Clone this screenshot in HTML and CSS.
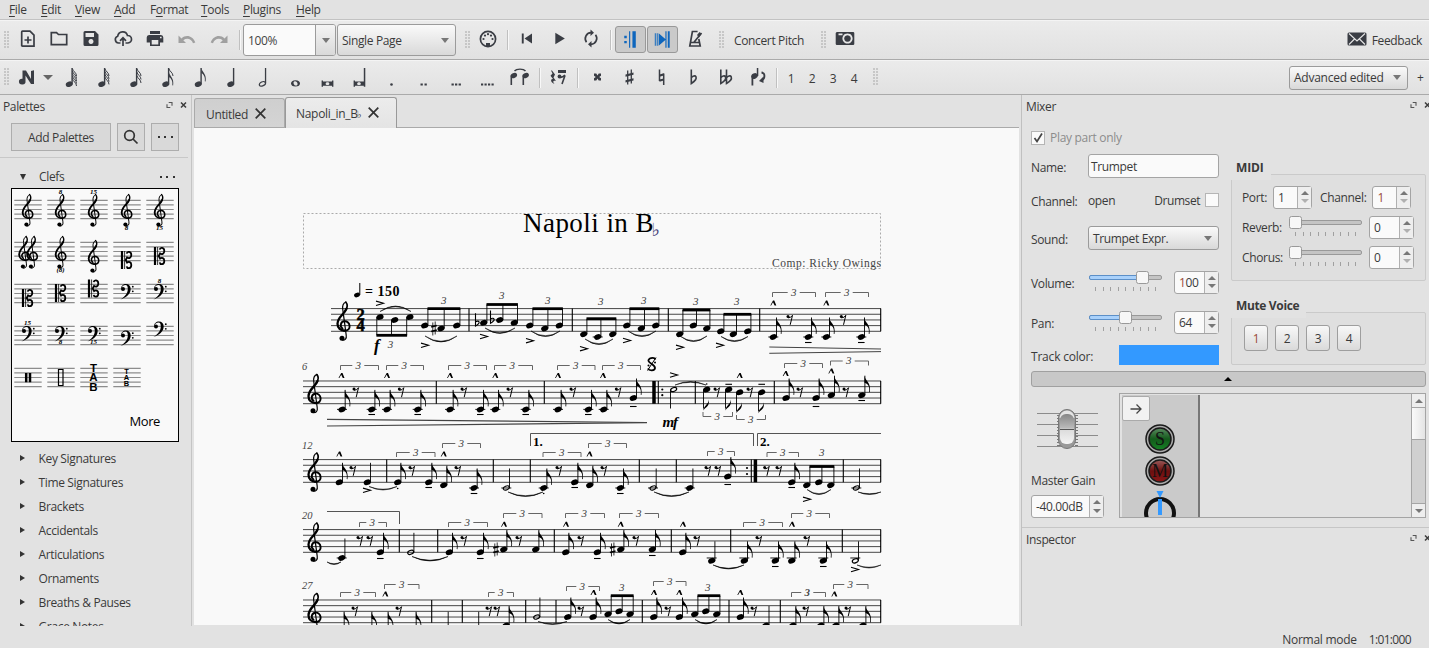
FILE: index.html
```html
<!DOCTYPE html>
<html lang="en">
<head>
<meta charset="utf-8">
<title>Napoli in B♭</title>
<link rel="stylesheet" href="styles.css">
</head>
<body>
<svg class="defs" width="0" height="0">
  <defs>
    <g id="treble" fill="none" stroke="currentColor" stroke-linecap="round">
      <path stroke-width="1.2" d="M2.6-23.6C0-22.5-1-19-.5-16L2.9 9.500C3.600 13.500 1.500 14.600-.6 14.600"/>
      <path stroke-width="1.700" d="M2.600-23.400C4.600-21 4.200-18 2-15"/>
      <path stroke-width="2.300" d="M3.200-17C1-11-5.600-9-5.800-1.800-5.800 2.500-2.500 5 1.200 5"/>
      <path stroke-width="1.900" d="M.6 5.100C5 5.200 6.600 3 6.300.2 6-3 3.500-4.700 1-4.300-2.500-4-4 .6-.8 2.800"/>
      <circle cx="-1.300" cy="12.700" r="2.500" fill="currentColor" stroke="none"/>
    </g>
    <g id="bass" fill="currentColor">
      <circle cx="-3.500" cy="0" r="2"/>
      <path d="M-5.400 0C-5.600-3-3.200-5-.6-5 2.500-5 4.200-3 4.200 0 4.200 5-.5 8.500-6 10.600-1.600 7.500 1.300 4.500 1.300 0 1.300-2.500.6-4-1-4-3-4-4.300-2.800-4.600-1.400z"/>
      <circle cx="6.300" cy="-2.300" r=".9"/><circle cx="6.300" cy="2.300" r=".9"/>
    </g>
    <g id="cclef" fill="none" stroke="currentColor">
      <path stroke-width="2.200" d="M-4.500-9V9"/><path stroke-width=".8" d="M-1.900-9V9"/>
      <path stroke-width="1.800" d="M.2-6.300C.6-9 4.800-9 4.800-5 4.800-2 2.300-1.300.6-2.600L-.8 0 .6 2.600C2.300 1.300 4.800 2 4.800 5 4.800 9 .6 9 .2 6.300"/>
    </g>
    <g id="staff" stroke="#8d8d8d" stroke-width="1.200"><path d="M2.300 11.300h27.400M2.300 15.900h27.400M2.300 20.500h27.400M2.300 25.100h27.400M2.300 29.700h27.400"/></g>
    <g id="i-note"><ellipse cx="-2.800" cy="7.200" rx="3.500" ry="2.600" transform="rotate(-20 -2.800 7.200)"/><path d="M-.6-9h1.400V7.500H-.6z"/></g>
    <g id="i-flag"><path d="M.3-9C1-5 6-3 4.600 4.500L3.800 4.300C4.500 0 2.500-3 .3-4z"/></g>
    <g id="i-sflag" fill="none" stroke="currentColor" stroke-width="1"><path d="M.3-8.500C1-5.500 4.500-4.500 4.500-1"/></g>
    <g id="i-float" fill="none" stroke="#555" stroke-width="1.100"><path d="M-.8-2.500H2.500V.8M.8 2.500H-2.500V-.8"/></g>
    <g id="i-close" fill="none" stroke="#3c3c3c" stroke-width="1.500"><path d="M-2.500-2.500l5 5M2.500-2.500l-5 5"/></g>
  </defs>
</svg>

<nav class="menu">
  <span class="m1"><u>F</u>ile</span><span class="m2"><u>E</u>dit</span><span class="m3"><u>V</u>iew</span><span class="m4"><u>A</u>dd</span><span class="m5">F<u>o</u>rmat</span><span class="m6"><u>T</u>ools</span><span class="m7"><u>P</u>lugins</span><span><u>H</u>elp</span>
</nav>

<div class="bar bar1">
  <i class="grip"></i>
  <svg class="ic first" viewBox="-16 -13 32 26"><g fill="none" stroke="currentColor" stroke-width="1.700"><path d="M-5.500-7.800H2L6-3.800V7.200H-5.500a.8.800 0 0 1-.8-.8V-7a.8.800 0 0 1 .8-.8zM0-2.500v7M-3.500 1h7"/></g></svg>
  <svg class="ic" viewBox="-16 -13 32 26"><path fill="none" stroke="currentColor" stroke-width="1.700" d="M-7.700-6.400h5.200l2 1.900H7.700V5.700H-7.700z"/></svg>
  <svg class="ic" viewBox="-16 -13 32 26"><path fill-rule="evenodd" d="M-6-8H4L7.500-4.500V5.500a1.500 1.500 0 0 1-1.500 1.500H-6A1.500 1.500 0 0 1-7.500 5.500V-6.500A1.500 1.500 0 0 1-6-8zM-5.500-6v4H3v-4zM0 0a2.500 2.500 0 1 0 .01 0z"/></svg>
  <svg class="ic" viewBox="-16 -13 32 26"><g fill="none" stroke="currentColor" stroke-width="1.700"><path d="M-2.500 4H-4.500A3.500 3.500 0 0 1-5.300-2.800C-4.500-8 3-9 4.500-3.500A3.700 3.700 0 0 1 5 4H2.500M0 7V-1M-3 1.800 0-1.200 3 1.800"/></g></svg>
  <svg class="ic" viewBox="-16 -13 32 26"><path fill-rule="evenodd" d="M-5-8H5v3H-5zM-6-4H6A2.500 2.500 0 0 1 8.300-1.500V3.500H5V7H-5V3.500H-8.300V-1.500A2.500 2.500 0 0 1-6-4zM-3.300 1v4.500H3.300V1zM5-2.300v1.600h1.600v-1.600z"/></svg>
  <svg class="ic dim" viewBox="-16 -13 32 26"><path d="M-8.500-3.500V4H-1L-3.700 1.300C0-1.500 4.500 0 6 4.200L8.300 3.400C6-3-1-5-5.500-.5z"/></svg>
  <svg class="ic dim" viewBox="-16 -13 32 26"><path d="M8.500-3.500V4H1L3.700 1.300C0-1.500-4.500 0-6 4.200L-8.300 3.400C-6-3 1-5 5.500-.5z"/></svg>
  <i class="sep s1"></i>
  <div class="combo zoom"><span>100%</span><b><i class="tri"></i></b></div>
  <div class="combo page"><span>Single Page</span><i class="tri"></i></div>
  <i class="grip g2"></i>
  <svg class="ic c2" viewBox="-16 -13 32 26"><circle r="7.600" fill="none" stroke="currentColor" stroke-width="1.700"/><circle cx="-4.500" cy="0" r="1.100"/><circle cx="4.500" cy="0" r="1.100"/><circle cx="-3" cy="-3.400" r="1.100"/><circle cx="3" cy="-3.400" r="1.100"/><circle cy="-4.800" r="1.100"/><path d="M-2 7.500V4h4v3.500z"/></svg>
  <i class="sep s2"></i>
  <svg class="ic" viewBox="-16 -13 32 26"><path d="M-5.200-5.500h1.900V4.500h-1.900zM5-5.500V4.500L-2.500-.5z"/></svg>
  <svg class="ic" viewBox="-16 -13 32 26"><path d="M-3.700-6.200V5.200L5.800-.5z"/></svg>
  <svg class="ic" viewBox="-16 -13 32 26"><g fill="none" stroke="currentColor" stroke-width="1.700"><path d="M-4.500 3.300A6 6 0 0 1 0-6.300M4.500-4.300A6 6 0 0 1 0 5.300"/></g><path d="M-.5-9.500V-3L3-6.300zM.5 8.500V2L-3 5.300z"/></svg>
  <i class="sep s3"></i>
  <span class="toggle"><svg viewBox="-15 -13 30 26"><path d="M2-8.500h3.500V8.500H2zM-1.500-8.500h1.200V8.500h-1.200zM-6.500-3.800h2.600v2.500h-2.600zM-6.500 1.500h2.600V4h-2.600z"/></svg></span>
  <span class="toggle"><svg viewBox="-15 -13 30 26"><path d="M-8-6.500h1V6.500h-1zM-6-6.500h1V6.500h-1zM-4-6.500 3.500 0-4 6.500zM3-8.500h1.200V8.500H3zM5.500-8.500h2V8.500h-2z"/></svg></span>
  <svg class="ic" viewBox="-16 -13 32 26"><g fill="none" stroke="currentColor" stroke-width="1.700"><path d="M3.800 0 5.200 7H-5.200L-2.600-7.500H2.600M-1 3.200 6.500-6M-4 3.500H4"/></g><path d="M2-4l2.500-3 2 2L4-1.500z"/></svg>
  <i class="grip g3"></i><span class="cp">Concert Pitch</span><i class="grip"></i>
  <svg class="ic cam" viewBox="-16 -13 32 26"><path fill-rule="evenodd" d="M-8.300-7H8A1.200 1.200 0 0 1 9.300-6V5A1.200 1.200 0 0 1 8 6H-8A1.200 1.200 0 0 1-9.300 5V-6zM-6.500-5.500v1.700h4v-1.700zM2.500-5.600a5.100 5.100 0 1 0 .01 0zM2.500-3.800a3.300 3.300 0 1 1-.01 0z"/></svg>
  <span class="feedback"><svg width="20" height="14" viewBox="0 0 20 14"><rect x=".5" y=".5" width="19" height="13" rx="1.500"/><path d="M2 1.500 10 9l8-7.500M2 12.500l5.500-5.500M18 12.500l-5.500-5.500" fill="none" stroke="#e8e8e8" stroke-width="1.100"/></svg>Feedback</span>
</div>

<div class="bar bar2">
  <i class="grip"></i>
  <svg class="nn" viewBox="0 0 28 26"><path d="M8.500 5.500h3.500l5 8.500V6l3-.8V19H17L11.500 10.500v5.700A3.300 2.900 0 1 1 8.500 13.700z"/></svg>
  <i class="tri big"></i>
  <svg class="ic" viewBox="-16 -13 32 26"><use href="#i-note"/><use href="#i-sflag"/><use href="#i-sflag" y="2.500"/><use href="#i-sflag" y="5"/><use href="#i-sflag" y="7.500"/><use href="#i-sflag" y="10"/></svg>
  <svg class="ic" viewBox="-16.500 -13 32 26"><use href="#i-note"/><use href="#i-sflag"/><use href="#i-sflag" y="2.800"/><use href="#i-sflag" y="5.600"/><use href="#i-sflag" y="8.400"/></svg>
  <svg class="ic" viewBox="-16.500 -13 32 26"><use href="#i-note"/><use href="#i-sflag"/><use href="#i-sflag" y="3.500"/><use href="#i-sflag" y="7"/></svg>
  <svg class="ic" viewBox="-16.500 -13 32 26"><use href="#i-note"/><use href="#i-sflag"/><use href="#i-flag" y="4"/></svg>
  <svg class="ic" viewBox="-17 -13 32 26"><use href="#i-note"/><use href="#i-flag"/></svg>
  <svg class="ic" viewBox="-17.500 -13 32 26"><use href="#i-note"/></svg>
  <svg class="ic" viewBox="-17 -13 32 26"><ellipse cx="-2.600" cy="6.800" rx="3.300" ry="2" transform="rotate(-25 -2.600 6.800)" fill="none" stroke="currentColor" stroke-width="1.200"/><path d="M-.1-9H1.200V6H-.1z"/></svg>
  <svg class="ic" viewBox="-15.500 -13 32 26"><path fill-rule="evenodd" d="M0 3.200c6 0 6 6.400 0 6.400s-6-6.400 0-6.400zM-.5 4.200C-3 4-2 8.500.5 8.600S2.500 4.300-.5 4.200z"/></svg>
  <svg class="ic" viewBox="-15.500 -13 32 26"><path fill-rule="evenodd" d="M-5.900 3.500h1.400V4.600h9V3.500h1.400v6.300H4.500V8.700h-9v1.100h-1.400zM0 5.200c-2.500 0-2.500 2.900 0 2.900s2.500-2.900 0-2.900z"/></svg>
  <svg class="ic" viewBox="-15.500 -13 32 26"><path fill-rule="evenodd" d="M-5.900 3.500h1.400V4.600h8.800V-9h1.500V9.800H4.300V8.700h-8.800v1.100h-1.400zM-.5 5.200c-2.500 0-2.500 2.900 0 2.900s2.500-2.900 0-2.900z"/></svg>
  <svg class="ic" viewBox="-15.500 -13 32 26"><circle cx="0" cy="7.500" r="1.300"/></svg>
  <svg class="ic" viewBox="-15.500 -13 32 26"><path d="M-3 6.400h2.300v2.200H-3zM1 6.400h2.300v2.200H1z"/></svg>
  <svg class="ic" viewBox="-16 -13 32 26"><path d="M-4.500 6.400h2.300v2.200h-2.300zM-1 6.400h2.300v2.200H-1zM2.600 6.400h2.300v2.200H2.600z"/></svg>
  <svg class="ic" viewBox="-15.500 -13 32 26"><path d="M-6.500 6.400h2.200v2.200h-2.200zM-3 6.400h2.200v2.200H-3zM.5 6.400h2.200v2.200H.5zM4 6.400h2.200v2.200H4z"/></svg>
  <svg class="ic" viewBox="-15.500 -13 32 26"><ellipse cx="-5.600" cy="-1.500" rx="3.300" ry="2.500" transform="rotate(-25 -5.600 -1.500)"/><ellipse cx="6.200" cy="-1.500" rx="3.300" ry="2.500" transform="rotate(-25 6.200 -1.500)"/><path d="M-9-1.500h1.600V8H-9zM3-1.500h1.600V8H3z"/><path d="M-5-6C-3-8.500 4-8.500 6-6" fill="none" stroke="currentColor" stroke-width="1.400"/></svg>
  <i class="sep t1"></i>
  <svg class="ic" viewBox="-16 -13 32 26"><path d="M-6-6.500-3-2.500-4.500.5-2 4C-5 3-5.500 4.500-3.500 7-8 5-7.500 1.500-5 2L-7.500-1.200-5.500-3.500-7-6.500z"/><path d="M0-7h8v3H0z"/><path fill="none" stroke="currentColor" stroke-width="1.600" d="M7-1.500 4 7M1 0C3 1 5 0 7-2"/><circle cx="1.500" cy="-.5" r="1.900"/></svg>
  <i class="sep t3"></i>
  <svg class="ic" viewBox="-16.500 -13 32 26"><path d="M-3.500-3.500h2.300L0-1.500l1.200-2h2.300v2.300L1.700 0l1.800 1.200v2.300H1.200L0 1.500l-1.200 2h-2.300V1.200L-1.700 0l-1.800-1.200z"/></svg>
  <svg class="ic" viewBox="-16.500 -13 32 26"><path fill="none" stroke="currentColor" stroke-width="1.300" d="M-1.800-6.500V7.500M1.800-7.500V6.500"/><path d="M-4-2.500 4-4.500v2.300l-8 2zM-4 3.200 4 1.200v2.300l-8 2z"/></svg>
  <svg class="ic" viewBox="-16.500 -13 32 26"><path fill="none" stroke="currentColor" stroke-width="1.500" d="M-2-7.500V4M2.200-3.500V8"/><path d="M-2-2.500 2.200-3.700v2.200L-2-.3zM-2 2.600 2.200 1.400v2.200L-2 4.800z"/></svg>
  <svg class="ic" viewBox="-16.500 -13 32 26"><path fill="none" stroke="currentColor" stroke-width="1.600" d="M-2.200-7.500V6.500C1 4.500 3.400 2 2.500-.2 1.700-1.800-1-1-2.200.8"/></svg>
  <svg class="ic" viewBox="-16.500 -13 32 26"><path fill="none" stroke="currentColor" stroke-width="1.600" d="M-4.700-7.500V6.500C-1 4.500.8 2 0-.2-.8-1.800-3.500-1-4.700.8M1-7.500V6.500C4.700 4.500 6.500 2 5.700-.2 5-1.800 2.200-1 1 .8"/></svg>
  <svg class="ic" viewBox="-17 -13 32 26"><ellipse cx="-3.500" cy="-1" rx="3.300" ry="2.700" transform="rotate(-25 -3.500 -1)"/><path d="M-6.500-1h1.800V8.500h-1.800zM-1.200-9H.3V-1h-1.500z"/><path fill="none" stroke="currentColor" stroke-width="1.800" d="M3.500-4.500C7.500-4 7.500 2 3 3.500"/><path d="M5.500-.5 1 4l4.500 2z"/></svg>
  <i class="sep t4"></i>
  <span class="vo">1</span><span class="vo">2</span><span class="vo">3</span><span class="vo">4</span>
  <i class="grip g4"></i>
  <div class="combo ws"><span>Advanced edited</span><i class="tri"></i></div><span class="plus">+</span>
</div>

<main>
<aside class="left">
  <header class="dock"><span>Palettes</span><svg width="24" height="12" viewBox="0 0 24 12"><use href="#i-float" x="4.500" y="6"/><use href="#i-close" x="18.500" y="6"/></svg></header>
  <div class="pbtns"><span class="flat">Add Palettes</span><span class="flat sq"><svg width="16" height="16" viewBox="0 0 16 16" fill="none" stroke="#333" stroke-width="1.700"><circle cx="6.500" cy="6.500" r="4.800"/><path d="M10 10l4.500 4.500"/></svg></span><span class="flat sq"><i class="dots"></i></span></div>
  <div class="phead"><i class="down"></i><span>Clefs</span><i class="dots"></i></div>
  <div class="pal"><div class="cells" id="cells"></div><span class="more">More</span></div>
  <ul class="tree"><li>Key Signatures</li><li>Time Signatures</li><li>Brackets</li><li>Accidentals</li><li>Articulations</li><li>Ornaments</li><li>Breaths &amp; Pauses</li><li>Grace Notes</li></ul>
</aside>

<section class="center">
  <div class="tabs">
    <div class="tab">Untitled<svg width="11" height="11" viewBox="0 0 11 11"><path d="M.7.700l9.600 9.600M10.300.700.7 10.300"/></svg></div>
    <div class="tab on"><span>Napoli_in_B<small>♭</small></span><svg width="11" height="11" viewBox="0 0 11 11"><path d="M.7.700l9.600 9.600M10.300.700.7 10.300"/></svg></div>
  </div>
  <svg id="score" class="score" width="825" height="498" viewBox="194 128 825 498"></svg>
</section>

<aside class="right">
  <section class="mixer">
    <header class="dock"><span>Mixer</span><svg width="24" height="12" viewBox="0 0 24 12"><use href="#i-float" x="8.500" y="6"/><use href="#i-close" x="22.500" y="6"/></svg></header>
    <label class="ppo"><i class="box"><svg width="12" height="12" viewBox="0 0 12 12"><path d="M2.500 6 5 9.500 10 1.500" fill="none" stroke="#444" stroke-width="1.700"/></svg></i>Play part only</label>
    <div class="cols">
      <div class="form">
        <div class="row h30"><span class="lb">Name:</span><div class="input">Trumpet</div></div>
        <div class="row h38"><span class="lb">Channel:</span><span class="dn">open</span><span class="drum dn">Drumset</span><i class="box"></i></div>
        <div class="row h38 snd"><span class="lb">Sound:</span><div class="combo sound"><span>Trumpet Expr.</span><i class="tri"></i></div></div>
        <div class="row h40"><span class="lb">Volume:</span><svg class="slider" width="75" height="24" viewBox="0 0 75 24"><rect class="trk" x="1.500" y="5.500" width="72" height="4" rx="1.500"/><rect class="fil" x="1.500" y="5.500" width="50" height="4" rx="1.500"/><path class="tk" d="M7.500 17v4M15.500 17v4M22.500 17v4M30.500 17v4M37.500 17v4M45.500 17v4M52.500 17v4M60.500 17v4M67.500 17v4"/><rect class="th" x="48.500" y="1.500" width="12" height="12" rx="2"/></svg><div class="spin"><span><em>1</em>00</span><b><i></i><i></i></b></div></div>
        <div class="row h40"><span class="lb">Pan:</span><svg class="slider" width="75" height="24" viewBox="0 0 75 24"><rect class="trk" x="1.500" y="5.500" width="72" height="4" rx="1.500"/><rect class="fil" x="1.500" y="5.500" width="35" height="4" rx="1.500"/><path class="tk" d="M7.500 17v4M15.500 17v4M22.500 17v4M30.500 17v4M37.500 17v4M45.500 17v4M52.500 17v4M60.500 17v4M67.500 17v4"/><rect class="th" x="31.500" y="1.500" width="12" height="12" rx="2"/></svg><div class="spin"><span>64</span><b><i></i><i></i></b></div></div>
        <div class="row h26"><span class="tc">Track color:</span><i class="swatch"></i></div>
      </div>
      <div class="groups">
        <h4>MIDI</h4>
        <div class="group midi">
          <div class="row h30"><span>Port:</span><div class="spin sm lo p1"><span>1</span><b><i></i><i></i></b></div><span class="chl">Channel:</span><div class="spin sm lo"><span class="red">1</span><b><i></i><i></i></b></div></div>
          <div class="row h30"><span class="rl">Reverb:</span><svg class="slider" width="75" height="24" viewBox="0 0 75 24"><rect class="trk" x="1.500" y="5.500" width="72" height="4" rx="1.500"/><path class="tk" d="M7.500 17v4M15.500 17v4M22.500 17v4M30.500 17v4M37.500 17v4M45.500 17v4M52.500 17v4M60.500 17v4M67.500 17v4"/><rect class="th" x="1.500" y="1.500" width="12" height="12" rx="2"/></svg><div class="spin lo"><span>0</span><b><i></i><i></i></b></div></div>
          <div class="row h30"><span class="rl">Chorus:</span><svg class="slider" width="75" height="24" viewBox="0 0 75 24"><rect class="trk" x="1.500" y="5.500" width="72" height="4" rx="1.500"/><path class="tk" d="M7.500 17v4M15.500 17v4M22.500 17v4M30.500 17v4M37.500 17v4M45.500 17v4M52.500 17v4M60.500 17v4M67.500 17v4"/><rect class="th" x="1.500" y="1.500" width="12" height="12" rx="2"/></svg><div class="spin lo"><span>0</span><b><i></i><i></i></b></div></div>
        </div>
        <h4 class="mute">Mute Voice</h4>
        <div class="group mv"><span class="red">1</span><span>2</span><span>3</span><span>4</span></div>
      </div>
    </div>
    <div class="collapse"><i class="up"></i></div>
    <div class="lower">
      <div class="gain">
        <svg width="64" height="44" viewBox="0 0 64 44"><defs><linearGradient id="kn" x2="0" y2="1"><stop offset="0" stop-color="#868686"/><stop offset=".45" stop-color="#b8b8b8"/><stop offset=".55" stop-color="#ddd"/><stop offset="1" stop-color="#f4f4f4"/></linearGradient></defs><path d="M2 6.500h61M2 17.500h61M2 28.500h61M2 39.500h61" stroke="#8c8c8c"/><path d="M23.500 8v31M41.500 8v31" stroke="#777" stroke-width="3" stroke-dasharray="1 2"/><rect x="23.500" y="2.500" width="17" height="39" rx="8.500" fill="#999" stroke="#777"/><path d="M24.500 11a7.500 7.500 0 0 1 15 0z" fill="#e4e4e4"/><rect x="25" y="7" width="14" height="30" rx="6" fill="url(#kn)"/><path d="M25 22.500h14" stroke="#555"/></svg>
        <span>Master Gain</span>
        <div class="spin db"><span>-40.00dB</span><b><i></i><i></i></b></div>
      </div>
      <div class="strips">
        <div class="strip">
          <span class="arrow"><svg width="12" height="12" viewBox="0 0 12 12" fill="none" stroke="#444" stroke-width="1.300"><path d="M.5 6H11M6.500 1.500 11 6l-4.500 4.500"/></svg></span>
          <svg class="knobs" width="40" height="93" viewBox="1140 425 40 93"><defs><linearGradient id="gr" x2="0" y2="1"><stop offset="0" stop-color="#5a8a60"/><stop offset=".5" stop-color="#145a1c"/><stop offset="1" stop-color="#158224"/></linearGradient><linearGradient id="rd" x2="0" y2="1"><stop offset="0" stop-color="#9a5a5a"/><stop offset=".5" stop-color="#6c1010"/><stop offset="1" stop-color="#8a1616"/></linearGradient></defs>
            <g stroke="#1a1a1a"><circle cx="1160" cy="440" r="14" fill="#aaa" stroke-width="1.500"/><circle cx="1160" cy="440" r="11" fill="url(#gr)" stroke-width="1.500"/><circle cx="1160" cy="472" r="14" fill="#aaa" stroke-width="1.500"/><circle cx="1160" cy="472" r="11" fill="url(#rd)" stroke-width="1.500"/></g>
            <text x="1160" y="445.500" class="kt">S</text><text x="1160" y="477.500" class="kt">M</text>
            <circle cx="1160" cy="514" r="14" fill="none" stroke="#111" stroke-width="4"/><path d="M1158 500h4v16h-4zM1156.500 492h7l-3.500 7z" fill="#3399ff"/></svg>
        </div>
        <div class="sbar"><b><i class="u"></i></b><em></em><b class="bot"><i class="d"></i></b></div>
      </div>
    </div>
  </section>
  <section class="inspector"><header class="dock"><span>Inspector</span><svg width="24" height="12" viewBox="0 0 24 12"><use href="#i-float" x="8.500" y="6"/><use href="#i-close" x="22.500" y="6"/></svg></header></section>
</aside>
</main>
<footer><span>Normal mode</span><span class="pos">1:01:000</span></footer>
<script src="score.js"></script>
</body>
</html>
```

FILE: styles.css
```css
* { box-sizing: border-box; }
html, body { margin: 0; height: 648px; overflow: hidden; }
body { width: 1429px; display: flex; flex-direction: column; background: #e2e2e2; color: #3a3a3a; font: 12px/16px "Open Sans", "Noto Sans", sans-serif; letter-spacing: -0.35px; white-space: nowrap; }
i { display: inline-block; font-style: normal; flex: none; }
b { font-weight: normal; }
em { font-style: normal; }
svg { display: block; flex: none; }
.defs { position: absolute; }
.red, .spin em { color: #9a4a38; }

.menu { height: 20px; display: flex; padding: 2px 0 0 9px; border-bottom: 1px solid #c2c2c2; flex: none; }
.menu u { text-underline-offset: 2px; }
.m1 { width: 32px; } .m2 { width: 34px; } .m3 { width: 39px; } .m4 { width: 36px; } .m5 { width: 51px; } .m6 { width: 42px; } .m7 { width: 53px; }

.bar { display: flex; align-items: center; flex: none; background: linear-gradient(#ebebeb, #e1e1e1); border-bottom: 1px solid #aaa; padding-left: 4px; border-top: 1px solid #f4f4f4; }
.bar1 { height: 40px; }
.bar2 { height: 35px; }
.grip { width: 6px; height: 18px; background: radial-gradient(circle at 1px 1px, #b0b0b0 0.5px, transparent 1px) 0 0 / 3px 3px; margin-top: -1px; }
.ic { width: 32px; height: 26px; color: #3a3d44; fill: #3a3d44; margin-top: -1px; }
.bar1 .ic { margin-top: -2px; }
.dim { fill: #a0a0a0; }
.first { margin-left: 1.5px; margin-right: -0.5px; }
.sep { width: 2px; height: 20px; background: #f8f8f8; border-left: 1px solid #c0c0c0; margin: 0 2px; }
.s1 { margin: 0 2px 0 4px; }
.combo { display: flex; align-items: center; justify-content: space-between; border: 1px solid #9b9b9b; border-radius: 3px; background: linear-gradient(#fafafa, #d9d9d9); }
.tri { border: 4px solid transparent; border-top: 5px solid #777; border-bottom: 0; }
.zoom { width: 93px; height: 32px; background: #fafafa; padding-left: 4px; }
.zoom span { flex: 1; padding-top: 2px; color: #444; }
.zoom b { width: 20px; height: 30px; border-left: 1px solid #9b9b9b; background: linear-gradient(#f4f4f4, #d9d9d9); display: flex; align-items: center; justify-content: center; border-radius: 0 2px 2px 0; }
.page { width: 119px; height: 32px; margin-left: 1px; padding: 0 6px 0 4px; }
.page span { padding-top: 2px; }
.g2 { margin-left: 9px; }
.c2 { margin-left: 1px; }
.s2 { margin: 0 2px 0 3px; }
.s3 { margin-right: 3px; margin-left: 3px; }
.toggle { width: 31px; height: 27px; border: 1px solid #999; border-radius: 3px; background: #cacaca; margin-right: 1px; fill: #0e66bd; margin-top: -1px; }
.toggle svg { width: 29px; height: 25px; }
.g3 { margin-left: 8px; }
.cp { width: 96px; padding: 2px 0 0 9px; }
.cam { margin-left: 2px; }
.feedback { margin-left: auto; margin-right: 7px; display: flex; align-items: center; gap: 5px; padding-top: 2px; fill: #3a3d44; }
.feedback svg { margin-top: -4px; }

.nn { width: 28px; height: 26px; margin-left: 4px; fill: #3a3d44; }
.big { border-width: 5px; border-bottom: 0; margin: 0 3px 0 1px; border-top-color: #666; }
.bar2 .sep { margin: 0 1px 0 3px; }
.bar2 .t3 { margin-right: 2px; }
.bar2 .t4 { margin-right: 2.5px; }
.vo { width: 21px; text-align: center; padding-top: 2px; }
.g4 { margin-left: 8px; }
.ws { width: 119px; height: 24px; padding: 0 6px 0 4px; margin-left: auto; margin-right: 9px; letter-spacing: -0.25px; }
.plus { width: 12px; }

main { display: flex; height: 531px; flex: none; }
.dock { height: 24px; display: flex; justify-content: space-between; align-items: center; padding: 0 2px 0 3px; }
.dock svg { margin-top: -4px; }
.left { width: 192px; border-right: 1px solid #c5c5c5; overflow: hidden; flex: none; }
.pbtns { display: flex; gap: 6px; padding: 4px 0 5px 11px; border-bottom: 1px solid #c8c8c8; margin: 0 3px 0 0; height: 39px; }
.flat { width: 100px; height: 28px; border: 1px solid #adadad; background: #d9d9d9; display: flex; align-items: center; justify-content: center; padding-top: 2px; }
.sq { width: 28px; padding: 0; }
.dots { width: 15px; height: 2px; background: linear-gradient(90deg, #333 2px, transparent 2px 6px, #333 6px 8px, transparent 8px 13px, #333 13px); }
.phead { height: 30px; display: flex; align-items: center; padding: 7px 16px 0 20px; }
.phead span { flex: 1; padding: 1px 0 0 13px; }
.down { border: 3.500px solid transparent; border-top: 6px solid #333; border-bottom: 0; }
.pal { margin: 0 0 0 11px; width: 168px; height: 254px; border: 1px solid #000; background: #f9f9f9; color: #000; display: flex; flex-direction: column; }
.cells { display: grid; grid-template-columns: repeat(5, 33px); grid-auto-rows: 42px; height: 224px; }
.cells svg { overflow: visible; width: 33px; height: 42px; }
.cells text { font: italic bold 7px "Liberation Serif", serif; text-anchor: middle; letter-spacing: 0; }
.cells .tab-c { font: bold 11.500px "Liberation Sans", sans-serif; }
.cells .tab-s { font: bold 7.500px "Liberation Sans", sans-serif; }
.more { align-self: flex-end; margin-right: 18px; font-size: 13px; letter-spacing: -0.4px; }
.tree { list-style: none; margin: 5px 0 0; padding: 0; height: 179px; overflow: hidden; }
.tree li { height: 24px; line-height: 24px; display: flex; align-items: center; padding-left: 20px; }
.tree li::before { content: ""; border: 3.500px solid transparent; border-left: 5.500px solid #333; border-right: 0; margin: -2px 13.500px 0 0; }

.center { width: 829px; padding-left: 2px; flex: none; }
.tabs { height: 33px; display: flex; align-items: flex-end; border-bottom: 1px solid #aaa; width: 825px; }
.tab { height: 29px; width: 91px; border: 1px solid #aaa; border-bottom: 0; border-radius: 3px 3px 0 0; background: linear-gradient(#cfcfcf, #d4d4d4); display: flex; align-items: center; justify-content: space-between; padding: 3px 18px 0 11px; }
.tab svg { stroke: #333; stroke-width: 1.700; margin-top: -2px; }
.on { width: 112px; height: 31px; background: linear-gradient(#ececec, #e4e4e4); margin-bottom: -1px; padding: 1px 17px 0 10px; }
.on { border-color: #999; letter-spacing: -0.3px; }
.tab small { font: bold 10px/8px "DejaVu Sans", sans-serif; margin-left: -1px; }
.score { background: #f9f9f9; font-family: "Liberation Serif", serif; color: #000; letter-spacing: 0; }

.right { width: 408px; border-left: 1px solid #c0c0c0; overflow: hidden; flex: none; }
.right .dock { padding: 0 0 0 4px; }
.mixer { height: 433px; border-bottom: 1px solid #c6c6c6; }
.ppo { display: flex; align-items: center; gap: 5px; color: #8c8c8c; padding-left: 9px; height: 32px; padding-top: 5px; letter-spacing: -0.3px; }
.box { width: 14px; height: 14px; background: #fafafa; border: 1px solid #b5b5b5; }
.cols { display: flex; padding-left: 9px; height: 220px; }
.form { width: 188px; }
.row { display: flex; align-items: center; }
.h30 { height: 30px; } .h38 { height: 38px; } .h40 { height: 40px; } .h26 { height: 26px; }
.lb { width: 57px; padding-top: 3px; }
.dn { padding-top: 2px; }
.tc { padding-top: 3px; letter-spacing: -0.2px; }
.input { width: 131px; height: 24px; background: #fafafa; border: 1px solid #a4a4a4; border-radius: 3px; padding: 4px 2px; }
.drum { margin-left: auto; margin-right: 5px; letter-spacing: -0.45px; }
.snd { margin-bottom: 5px; }
.sound { width: 131px; height: 24px; padding: 0 6px 0 4px; }
.sound span { padding-top: 1px; }
.trk { fill: #c4c4c4; stroke: #999; } .fil { fill: #a9d1fb; stroke: #5c8fc7; } .th { fill: #f7f7f7; stroke: #999; } .tk { stroke: #a0a0a0; }
.slider { margin-right: 11px; }
.form .slider { margin-left: 1px; }
.spin { width: 45px; height: 23px; border: 1px solid #a4a4a4; border-radius: 3px; background: #fafafa; display: flex; align-items: center; padding-left: 4px; flex: none; }
.spin span { flex: 1; padding-top: 1px; }
.spin b { width: 14px; height: 21px; border-left: 1px solid #b0b0b0; background: #eee; display: flex; flex-direction: column; align-items: center; justify-content: space-evenly; }
.spin i:first-child { border: 4px solid transparent; border-bottom: 4px solid #777; border-top: 0; }
.spin i:last-child { border: 4px solid transparent; border-top: 4px solid #777; border-bottom: 0; }
.spin.lo i:last-child { border-top-color: #b0b0b0; }
.sm { width: 39px; }
.p1 { margin-left: 6px; }
.swatch { width: 100px; height: 20px; background: #3399ff; margin-left: auto; }
.groups { width: 195px; margin-left: 12px; }
h4 { margin: 0 0 -6px; font: bold 12px/16px "Open Sans", sans-serif; letter-spacing: -0.1px; padding-left: 5px; width: 40px; height: 29px; padding-top: 9px; background: #e2e2e2; position: relative; }
.mute { width: 75px; margin-top: 8px; letter-spacing: -0.35px; }
.group { border: 1px solid #cacaca; background: #dfdfdf; border-radius: 2px; }
.midi { height: 107px; padding: 7px 0 0 10px; }
.midi .row > span { padding-top: 2px; }
.chl { margin: 0 6px 0 8px; }
.rl { width: 46px; }
.midi .slider { margin-right: 6px; }
.mv { height: 53px; display: flex; gap: 7px; padding: 12px 0 0 12px; }
.mv span { width: 24px; height: 26px; border: 1px solid #9e9e9e; border-radius: 3px; background: linear-gradient(#f8f8f8, #dadada); text-align: center; line-height: 26px; }
.collapse { height: 16px; width: 395px; margin-left: 9px; background: #c8c8c8; border: 1px solid #a0a0a0; border-radius: 3px; display: flex; align-items: center; justify-content: center; padding-right: 1px; }
.up { border: 4px solid transparent; border-bottom: 4px solid #000; border-top: 0; }
.lower { display: flex; padding: 6px 0 0 9px; }
.gain { width: 88px; display: flex; flex-direction: column; padding-top: 14px; }
.gain svg { margin-left: 4px; }
.gain > span { margin: 22px 0 6px; }
.db { width: 73px; }
.strips { width: 307px; height: 125px; border: 1px solid #a4a4a4; display: flex; justify-content: space-between; overflow: hidden; }
.strip { width: 78px; margin: 1px 0 0 2px; background: #cacaca; border-right: 2px solid #777; display: flex; flex-direction: column; }
.arrow { width: 28px; height: 28px; margin-top: 1px; border: 1px solid #aaa; border-radius: 2px; background: #f2f2f2; display: flex; align-items: center; justify-content: center; }
.knobs { margin-left: 18px; margin-top: 3px; }
.kt { font: 18px "Liberation Serif", serif; text-anchor: middle; fill: #111; letter-spacing: 0; }
.sbar { width: 14px; background: #d0d0d0; border-left: 1px solid #a4a4a4; display: flex; flex-direction: column; }
.sbar b { height: 14px; background: #eee; border-bottom: 1px solid #a4a4a4; display: flex; align-items: center; justify-content: center; }
.sbar em { height: 32px; background: linear-gradient(90deg, #fafafa, #e4e4e4); border-bottom: 1px solid #a4a4a4; }
.sbar .bot { margin-top: auto; border: 0; border-top: 1px solid #a4a4a4; }
.u { border: 4px solid transparent; border-bottom: 4px solid #777; border-top: 0; }
.d { border: 4px solid transparent; border-top: 4px solid #777; border-bottom: 0; }

footer { height: 22px; display: flex; justify-content: flex-end; padding: 6px 18px 0 0; letter-spacing: -0.27px; }
.pos { margin-left: 12px; letter-spacing: -0.65px; }
```

FILE: score.js
```js
const S = 2.84;
const out = [];
let bottom = 0;
const line = (x1, y1, x2, y2, w, c) => out.push(`<path d="M${x1} ${y1}L${x2} ${y2}" stroke="${c || '#000'}" stroke-width="${w}" fill="none"/>`);
const text = (x, y, s, size, o = '') => out.push(`<text x="${x}" y="${y}" font-size="${size}" ${o}>${s}</text>`);
const yOf = s => bottom - s * S;

function head(x, s, hollow) {
  const y = yOf(s);
  out.push(`<ellipse cx="${x}" cy="${y}" rx="${hollow ? 3.1 : 3.7}" ry="${hollow ? 1.9 : 2.7}" transform="rotate(-22 ${x} ${y})" ${hollow ? 'fill="none" stroke="#000" stroke-width="1.2"' : ''}/>`);
  if (s <= -2) line(x - 5, yOf(-2), x + 5, yOf(-2), 0.9);
}
// kind: e = eighth, q = quarter, h = half; capital letter puts the stem below
function note(x, s, kind) {
  const y = yOf(s), k = kind.toLowerCase(), down = kind !== k;
  head(x, s, k === 'h');
  if (down) {
    line(x - 3.2, y, x - 3.2, y + 19, 0.9);
    if (k === 'e') out.push(`<path d="M${x - 3.3} ${y + 21}c0-5 5.500-6 5.200-11 .9 4-.5 6-1.700 7.200-1.500 1.400-2.800 2-3.500 3.800z"/>`);
  } else {
    line(x + 3.2, y, x + 3.2, y - 19.5, 0.9);
    if (k === 'e') out.push(`<path d="M${x + 2.8} ${y - 19.500}c.8 5.500 6.800 6.500 5.400 16.500l-.8-.2c1-6-1.500-8.500-4.600-9.300z"/>`);
  }
}
const rest = x => {
  const y = bottom - 11.5;
  out.push(`<circle cx="${x - 2}" cy="${y - 3.300}" r="1.500"/><path d="M${x - 2} ${y - 1.900}q3 0 4.500-2.600L${x + .2} ${y + 5}" fill="none" stroke="#000" stroke-width="1"/>`);
};
const bar = (...xs) => xs.forEach(x => line(x, bottom - 22.7, x, bottom, 1.1));
const accent = (x, y) => out.push(`<path d="M${x - 4} ${y - 2.200}l7.500 2.200-7.500 2.200" fill="none" stroke="#000" stroke-width="1.100"/>`);
const marc = (x, y) => out.push(`<path d="M${x - 3} ${y + 2.500}L${x - .3} ${y - 2.500}L${x + 1} ${y - 2.500}L${x + 3} ${y + 2.500}H${x + 1.300}L${x - .3} ${y - .8}L${x - 2.200} ${y + 2.500}z"/>`);
const ten = (x, y) => line(x - 3.3, y, x + 3.3, y, 1.1);
const dot = (x, y, r = 0.8) => out.push(`<circle cx="${x}" cy="${y}" r="${r}"/>`);
const three = (x, y, o = '') => text(x, y + 3.2, '3', 11, `text-anchor="middle" font-style="italic" fill="#444" ${o}`);
function bracket(a, b, y, c, below, o) {
  const d = below ? -4.5 : 4.5;
  out.push(`<path d="M${a} ${y + d}V${y}H${c - 6}M${c + 6} ${y}H${b}V${y + d}" fill="none" stroke="#666" stroke-width="1"/>`);
  three(c, y, o);
}
const slur = (a, b, y, h) => out.push(`<path d="M${a} ${y}Q${(a + b) / 2} ${y + h * 2} ${b} ${y}Q${(a + b) / 2} ${y + h * 2 - Math.sign(h) * 1.600} ${a} ${y}" stroke="#000" stroke-width=".5"/>`);
function group(xs, ss, beamY, nx, ny, down) {
  const dx = down ? -3.2 : 3.2;
  xs.forEach((x, i) => { head(x, ss[i]); line(x + dx, yOf(ss[i]), x + dx, beamY, 0.9); });
  line(xs[0] + dx - .4, beamY, xs[2] + dx + .4, beamY, 2.8);
  three(nx, ny);
}
const glyph = (x, s, g) => {
  const y = yOf(s);
  if (g === '#') out.push(`<path d="M${x - 1.200} ${y - 6}v13M${x + 1.200} ${y - 7}v13" stroke="#000" stroke-width=".8"/><path d="M${x - 2.800} ${y - 1.500}l5.600-1.500M${x - 2.800} ${y + 3}l5.600-1.500" stroke="#000" stroke-width="1.600"/>`);
  else out.push(`<path d="M${x - 2} ${y - 9.500}V${y + 3.300}C${x + 4} ${y} ${x + 1.500} ${y - 3} ${x - 2} ${y - 1}" fill="none" stroke="#000" stroke-width="1.100"/>`);
};
function system(b, x0, cx, num) {
  bottom = b;
  for (let i = 0; i < 5; i++) line(x0, b - i * S * 2, 881, b - i * S * 2, 0.9, '#333');
  out.push(`<use href="#treble" x="${cx}" y="${b - S * 2}"/>`);
  if (num) text(302, b - 33.7, num, 10.5, 'font-style="italic" fill="#444"');
  bar(880.7);
}
const notes = (kind, arr) => arr.forEach(([x, s]) => note(x, s, kind));

// Title frame
out.push('<rect x="303.500" y="213.500" width="577" height="55" fill="none" stroke="#aaa" stroke-dasharray="2 2"/>');
text(523, 232, 'Napoli in B', 27, 'textLength="130.500"');
text(651.5, 236, '♭', 18, 'font-family="DejaVu Sans" fill="#45407a"');
text(772, 267, 'Comp: Ricky Owings', 11.5, 'textLength="109" fill="#444"');

// System 1
system(331.3, 331, 343.3);
text(360.5, 319.8, '2', 16.5, 'text-anchor="middle" font-weight="bold" stroke="#000" stroke-width=".5"');
text(360.5, 331.2, '4', 16.5, 'text-anchor="middle" font-weight="bold" stroke="#000" stroke-width=".5"');
out.push('<ellipse cx="357" cy="295" rx="3" ry="2.200" transform="rotate(-20 357 295)"/><path d="M359.300 283h1v12h-1z"/>');
text(365, 296, '= 150', 14, 'font-weight="bold" textLength="34.500"');
group([380, 394.7, 409.9], [5, 4, 5], 335.3, 390.5, 345, true);
slur(380, 411, 311.5, -5.5); accent(380, 303.3);
text(374, 350.500, 'f', 17, 'font-style="italic" font-weight="bold"');
group([424.7, 441, 456.7], [2, 1, 2], 308.7, 443.7, 300.7); glyph(434, 1, '#');
slur(425, 457, 336, 6); accent(425, 345.3);
bar(469, 572.3, 668.3, 759.7);
group([483.7, 499.7, 514.3], [3, 4, 3], 304.5, 501.7, 295.7); glyph(477.5, 3, 'b'); glyph(492.5, 4, 'b');
slur(485, 515, 328, 5.5); accent(484, 336.5);
group([529.7, 544.7, 559.3], [2, 1, 2], 308.7, 547.7, 300.7); slur(531, 560, 331, 5.5); accent(530, 340.7);
group([583.7, 597.7, 612.7], [-1, -2, -1], 318.7, 600.7, 301.7); slur(585, 613, 339, 5.5); accent(584, 348.7);
group([626.7, 641.3, 655.7], [2, 1, 2], 308.7, 643.7, 301); slur(628, 656, 331, 5.5); accent(627, 340.5);
group([679.7, 693.3, 706.7], [-1, 2, 1], 310, 695.7, 301.7); slur(680, 707, 336, 5.5); accent(680, 347.3);
group([720.7, 733.3, 747.7], [0, -1, 0], 314.3, 736.7, 301.7); slur(721, 748, 336.500, 5); accent(720, 345.3);
notes('e', [[773.3, -2], [808.3, -2], [826.3, -2], [861.3, -2]]);
[790, 843.3].forEach(rest); ten(808.3, 342.5); ten(861.3, 342.5); marc(773.3, 303); marc(826.3, 303);
bracket(772.5, 815.5, 292.5, 793.7); bracket(825.5, 868.5, 292.5, 846.7);
line(769.3, 347, 881, 349, 1, '#444'); line(769.3, 353.3, 881, 351.6, 1, '#444');

// System 2
system(403.7, 303, 314.3, '6');
notes('e', [[342, -2], [371.7, -2], [387, -2], [417.7, -2], [450, -2], [480.3, -2], [495.3, -2], [525.7, -2], [558, -2], [588.3, -2], [603.7, -2], [633.3, 2], [786, 2], [816, 2], [831.3, 3], [861.7, 3]]);
[356, 401.3, 464, 510, 573, 618.3, 717, 750, 800, 846].forEach(rest);
[371.7, 417.7, 480.3, 525.7, 588.3].forEach(x => ten(x, 414.5));
ten(633.3, 406.5); ten(816, 406.5); ten(861.7, 400.5); ten(728.7, 384.3); ten(761.7, 384.3);
[341.5, 387, 450, 495.3, 558, 603].forEach(x => marc(x, 375.5));
marc(739.7, 375.5); marc(785.7, 373.5); marc(831.3, 371);
[[340.5, 378.5, 358.3], [386.5, 423.5, 404.3], [448.5, 486.5, 467.3], [494.5, 532.5, 512.3], [557.5, 595, 575.7], [602.5, 640.5, 620.7]].forEach(a => bracket(a[0], a[1], 365.5, a[2]));
bracket(784.5, 822.5, 363.5, 803.3); bracket(830.5, 868.5, 361, 848.7);
bar(436.3, 544.3, 658.3, 695.3, 774.3); line(654, 381, 654, 403.7, 3.5);
dot(662.3, 389.5, 1.1); dot(662.3, 395.2, 1.1);
out.push('<path d="M655.500 359.500c-1.500-3-8-1-7 1.500 1 2.500 6.500 3.500 6.500 7 0 3-6 3-7 .5" fill="none" stroke="#000" stroke-width="1.800"/><path d="M647.500 370.500l8.500-13" stroke="#000"/><circle cx="648.500" cy="365.500" r="1"/><circle cx="655" cy="362.500" r="1"/>');
note(673.7, 5, 'H'); accent(674, 375); slur(675, 706, 385, -3.5);
text(662.500, 426.500, 'mf', 15, 'font-style="italic" font-weight="bold" textLength="15.500"');
notes('E', [[706.7, 5], [728.7, 5], [739.7, 4], [761.7, 4]]); dot(706.7, 384);
bracket(703, 732.5, 416.5, 717.3, true); bracket(736.5, 765.5, 419.5, 750.7, true);
line(327, 419.3, 647, 422.5, 1.2, '#444'); line(327, 426, 647, 422.7, 1.2, '#444');

// System 3
system(482.3, 303, 314.3, '12');
notes('e', [[339.3, 0], [397.7, 0], [428.7, 0], [443.7, -1], [474, -2], [543.7, -2], [574.7, 0], [589.7, -1], [620.3, -2], [727.7, 2], [791.7, 0]]);
notes('q', [[367.3, 0], [689.7, -2]]); notes('h', [[506.3, -2], [653, -2], [856.3, -2]]);
[353, 412, 458, 559, 604, 708, 718, 766.7, 779].forEach(rest);
[[428.7, 487.5], [474, 493.5], [574.7, 487.5], [620.3, 493.5], [727.7, 484.5], [791.7, 487.5]].forEach(a => ten(...a));
marc(339.3, 454); marc(443.7, 454); marc(589.5, 454); accent(367, 490.3); dot(397.7, 488.500); dot(543.7, 493.500);
bracket(396.5, 435, 452.5, 415.7); bracket(442.5, 480.5, 443.5, 461.3); bracket(543, 581, 452.5, 561.7); bracket(588.5, 626.5, 443.5, 607.7); bracket(707.5, 734.5, 451.5, 720.7); bracket(767, 798.5, 452.5, 782.7);
slur(369, 397, 486.5, 3.500); slur(508, 543, 492, 4.5); slur(654, 689, 492, 4.5); slur(807, 831, 489.5, 5); slur(858, 881, 492, 2.5);
bar(386.7, 493.3, 530.3, 639.3, 676.3, 751.3, 843.3); line(755.4, 459.5, 755.4, 482.3, 3.5); dot(747, 468, 1.1); dot(747, 474, 1.1);
out.push('<path d="M530.500 446V433.500H753.500V446M757.500 446V433.500H881" fill="none" stroke="#555"/>');
text(533, 445.5, '1.', 13, 'font-weight="bold"'); text(760, 445.5, '2.', 13, 'font-weight="bold"');
group([806.7, 818.7, 830.7], [-1, 0, -1], 466.5, 821.7, 452.7); accent(807, 499.3);

// System 4
system(552.3, 303, 314.3, '20');
notes('e', [[380.3, 0], [449.3, 0], [480.3, 0], [503.7, 1], [535.7, 1], [565.7, 0], [597.3, 0], [620.7, 1], [652.3, 1], [682.7, 0], [744.3, -3], [775.3, -3], [791.7, -3], [823.3, -3]]);
notes('q', [[341.7, -2], [711.7, -3]]); notes('h', [[410.7, 0], [855.3, -3]]);
[360, 370, 464, 519, 581, 636, 697, 759, 807].forEach(rest);
[[380.3, 558.5], [480.3, 558.5], [597.3, 558.5], [652.3, 555.5], [775.3, 566.5], [823.3, 566.5]].forEach(a => ten(...a));
[504, 566, 620.7, 683, 792].forEach(x => marc(x, 524.3)); glyph(496, 1, '#'); glyph(612.7, 1, '#');
bracket(359.5, 386.5, 522.5, 372.3); bracket(448.5, 487.5, 522.5, 467.3); bracket(503.5, 542, 513.5, 522.3); bracket(565.5, 604.5, 513.5, 584.3); bracket(619.5, 658.5, 513.5, 638.7); bracket(743.5, 782.5, 522.5, 762.3); bracket(791.5, 829.5, 513.5, 809.3);
slur(327, 341, 562, 2.5); slur(412, 448, 556.500, 4.5); slur(713, 744, 565, 4); slur(857, 881, 565, 3); accent(855, 569.5);
bar(399.3, 437.7, 554.3, 671.3, 730.7, 842.3);
out.push('<path d="M327 511.500H399.500V524" fill="none" stroke="#555"/>');

// System 5
system(622.7, 303, 314.3, '27');
notes('e', [[341, -3], [368.7, -3], [385, -3], [413, -3], [506, -1], [567.7, 2], [593, 2], [653.7, 2], [679.3, 2], [740.3, 2], [792.7, -1], [820.7, -1], [835.7, -1], [862.7, -1]]);
notes('q', [[445, -3], [475.5, -3], [765.8, -1]]); note(536.7, 2, 'h');
[355, 399, 489, 497, 581, 668, 754, 806, 848].forEach(rest);
bracket(340.5, 375.5, 592.5, 357.3); bracket(384.5, 419, 584.5, 401.7); bracket(488.5, 513.5, 592.5, 500.7); bracket(566.5, 599.5, 586.5, 582.3); bracket(653.5, 686, 581.5, 669.7); bracket(791.5, 825.5, 592.5, 807.3, false, 'font-weight="bold"'); bracket(833.5, 868, 584.5, 850.3);
marc(385.3, 594); marc(834.3, 594); [593.5, 654, 679.3, 740.3].forEach(x => marc(x, 592.5));
group([608, 619, 630], [3, 4, 3], 595.7, 621.7, 587.5); group([694.7, 705.7, 716.7], [3, 4, 3], 595.7, 707.7, 587.5);
slur(608, 630, 619.5, 4.5); slur(695, 717, 619.5, 4.5); slur(538, 567, 621.5, 3);
bar(431.7, 462.3, 525.7, 556, 642.3, 729, 780.3);
out.push('<path d="M194 625h826v2H194z" fill="#e2e2e2"/>');
document.getElementById('score').innerHTML = out.join('');

// Clef palette: [symbol, y, label, label y]
const T = 'treble', B = 'bass', C = 'cclef';
const clefs = [[T, 25], [T, 25, '8', 5], [T, 25, '15', 5], [T, 25, '8', 41], [T, 25, '15', 41],
  ['tt', 25], [T, 25, '(8)', 41], [T, 29], [C, 29], [C, 25],
  [C, 25], [C, 20], [C, 15.5], [B, 16], [B, 16, '8', 10],
  [B, 16, '15', 10], [B, 16, '8', 29], [B, 16, '15', 29], [B, 20.5], [B, 11.5], ['perc'], ['perc2'], ['tab'], ['tabs']];
document.getElementById('cells').innerHTML = clefs.map(([k, y, l, ly]) => {
  let g;
  const tr = (x) => `<g transform="translate(${x} ${y}) scale(.83)"><use href="#treble"/></g>`;
  if (k === T) g = tr(15.500);
  else if (k === 'tt') g = tr(12) + tr(20);
  else if (k === 'perc') g = '<path d="M14.200 16v9.200M18 16v9.200" stroke="#000" stroke-width="2.500"/>';
  else if (k === 'perc2') g = '<path d="M13.500 12.500h4.500v16h-4.500z" fill="none" stroke="#000" stroke-width="1.200"/>';
  else if (k === 'tab' || k === 'tabs') {
    const base = k === 'tab' ? [14.5, 24, 33.5] : [17, 23.2, 29.4];
    g = ['T', 'A', 'B'].map((c, i) => `<text class="${k === 'tab' ? 'tab-c' : 'tab-s'}" x="15.500" y="${base[i]}">${c}</text>`).join('');
  } else g = `<g transform="translate(15.500 ${y})"><use href="#${k}"/></g>`;
  return `<svg viewBox="0 0 33 42"><use href="#staff"/>${g}${l ? `<text x="15.500" y="${ly}">${l}</text>` : ''}</svg>`;
}).join('');
```
